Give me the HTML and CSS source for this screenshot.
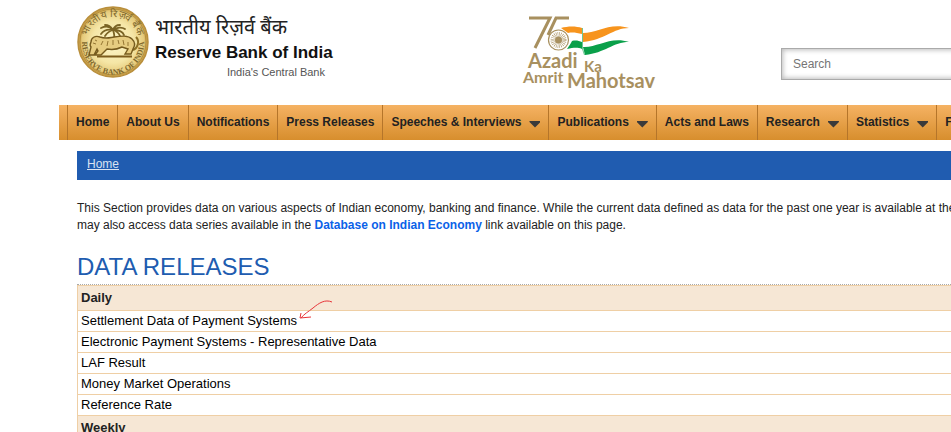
FILE: index.html
```html
<!DOCTYPE html>
<html lang="en">
<head>
<meta charset="utf-8">
<title>Reserve Bank of India</title>
<link rel="stylesheet" href="styles.css">
</head>
<body>
<header class="header">
  <div class="brand">
    <svg class="seal" viewBox="0 0 72 72" role="img" aria-label="Reserve Bank of India seal">
      <defs>
        <radialGradient id="gold" cx="0.5" cy="0.5" r="0.5">
          <stop offset="0" stop-color="#fdf6cc"/>
          <stop offset="0.6" stop-color="#f5e6a6"/>
          <stop offset="0.88" stop-color="#e6cb7c"/>
          <stop offset="1" stop-color="#bd9038"/>
        </radialGradient>
        <path id="arc-top" d="M10.500 42a26 26 0 1 1 51 0"/>
        <path id="arc-bottom" d="M5.500 32a31 31 0 1 0 61 0"/>
      </defs>
      <circle cx="36" cy="36" r="35" fill="url(#gold)" stroke="#b98f3c" stroke-width="1.500"/>
      <circle cx="36" cy="36" r="33" fill="none" stroke="#a37a2a" stroke-width="0.600"/>
      <text class="seal-hindi"><textPath href="#arc-top" startOffset="50%">भारतीय रिज़र्व बैंक</textPath></text>
      <text class="seal-text"><textPath href="#arc-bottom" startOffset="50%">RESERVE BANK OF INDIA</textPath></text>
      <g fill="none" stroke="#7a6324" stroke-width="1.800" stroke-linecap="round">
        <path d="M37 33c1-3 0-6-1-9"/>
        <path d="M36 24c-3-4-8-4-12-2M36 24c-6-1-10 1-12 4M36 24c-4 1-6 3-8 6M36 24c-2-3-5-5-8-5M36 24c1-3 3-5 7-5M36 24c4-3 9-3 12-1M36 24c6 0 10 2 11 5M36 24c3 1 6 3 7 6"/>
      </g>
      <path d="M55 44c6-1 8-9 4-13" fill="none" stroke="#8d7025" stroke-width="2"/>
      <path d="M14 36c0-4 4-7 9-5 6 2 8 1 14 0 7-1 14-2 18 2 3 3 3 7 1 10l-2 5h-6l3-5-6-2c-6 3-10 3-15 2l-4 4-2 2h-6l3-4-1-2-3 6h-5l2-8c-1-1-1-3 0-5z" fill="#e6cc80" stroke="#755a1d" stroke-width="1.400"/>
      <path d="M16 37l3 1M18 34l2 1M26 35l-2 4M31 35l-1 5M36 34v5M41 34l1 4M46 34l1 5M51 36v4" stroke="#957632" stroke-width="1"/>
      <path d="M20 50.500h35" stroke="#7d5c1c" stroke-width="2"/>
    </svg>
    <div class="brand-text">
      <span class="brand-hindi" lang="hi">भारतीय रिज़र्व बैंक</span>
      <span class="brand-name">Reserve Bank of India</span>
      <span class="brand-tag">India's Central Bank</span>
    </div>
  </div>
  <svg class="azadi" viewBox="0 0 134 80" role="img" aria-label="75 Azadi Ka Amrit Mahotsav">
    <g fill="none" stroke="#a8905f" stroke-width="3">
      <path d="M7 4h21L13 34"/>
      <path d="M47 4H34L26 21"/>
    </g>
    <path d="M39 14c7-2 15-2 21 0v6c-5-1-9-2-14-1z" fill="#f7941d"/>
    <path d="M61 19c14 0 27-11 46-5-16 0-24 12-46 14z" fill="#f7941d"/>
    <path d="M45 35c2-3 4-6 5-8 4-1 7 0 10 1v7c-5-2-9-1-15 0z" fill="#0aa04a"/>
    <path d="M61 33c14 1 27-11 46-5-16 0-24 11-44 13z" fill="#0aa04a"/>
    <path d="M60.500 14v21l2 6" fill="none" stroke="#0aa04a" stroke-width="0.600"/>
    <circle cx="36.500" cy="26" r="10" fill="#fff" stroke="#a8905f" stroke-width="1.200"/>
    <circle cx="36.500" cy="26" r="5.500" fill="none" stroke="#a8905f" stroke-width="5" stroke-dasharray="0.500 0.940"/>
    <circle cx="36.500" cy="26" r="3.500" fill="#a8905f"/>
    <g class="azadi-text">
      <text x="6" y="54" font-size="20">Azadi</text>
      <text x="62" y="58" font-size="15">Ka</text>
      <text x="1" y="69" font-size="16">Amrit</text>
      <text x="45" y="74" font-size="20">Mahotsav</text>
    </g>
  </svg>
  <form class="search">
    <input class="search-box" type="search" placeholder="Search" aria-label="Search">
  </form>
</header>

<nav class="nav" aria-label="Main">
  <a class="nav-item" href="#">Home</a>
  <a class="nav-item" href="#">About Us</a>
  <a class="nav-item" href="#">Notifications</a>
  <a class="nav-item" href="#">Press Releases</a>
  <a class="nav-item has-menu" href="#">Speeches &amp; Interviews</a>
  <a class="nav-item has-menu" href="#">Publications</a>
  <a class="nav-item" href="#">Acts and Laws</a>
  <a class="nav-item has-menu" href="#">Research</a>
  <a class="nav-item has-menu" href="#">Statistics</a>
  <a class="nav-item" href="#">FAQs</a>
</nav>

<main class="content">
  <div class="breadcrumb"><a href="#">Home</a></div>
  <p class="intro">This Section provides data on various aspects of Indian economy, banking and finance. While the current data defined as data for the past one year is available at the<br>may also access data series available in the <a href="#">Database on Indian Economy</a> link available on this page.</p>
  <h1 class="title">DATA RELEASES</h1>
  <table class="releases">
    <tbody>
      <tr><th scope="rowgroup">Daily</th></tr>
      <tr><td><span class="marked">Settlement Data of Payment Systems
        <svg class="pen" viewBox="0 0 36 22" aria-hidden="true"><path d="M35 3C28 0 22 4 16 9 11 13 7 15 4 19M4 14L3 19L14 18"/></svg></span></td></tr>
      <tr><td>Electronic Payment Systems - Representative Data</td></tr>
      <tr><td>LAF Result</td></tr>
      <tr><td>Money Market Operations</td></tr>
      <tr><td>Reference Rate</td></tr>
    </tbody>
    <tbody>
      <tr><th scope="rowgroup">Weekly</th></tr>
    </tbody>
  </table>
</main>
</body>
</html>
```
FILE: styles.css
```css
body {
  margin: 0;
  overflow: hidden;
  background: #fff;
  color: #222;
  font: 12px/17px "Liberation Sans", Arial, sans-serif;
}

.header {
  display: flex;
  align-items: flex-start;
  height: 99px;
  padding: 6px 0 0 77px;
}

.brand {
  display: flex;
  gap: 6px;
  width: 445px;
  flex: none;
}

.seal {
  width: 72px;
  height: 72px;
  flex: none;
}

.seal-hindi,
.seal-text {
  fill: #80682c;
  text-anchor: middle;
}

.seal-hindi {
  font-size: 10px;
}

.seal-text {
  font-family: "Liberation Serif", serif;
  font-size: 8px;
  font-weight: bold;
}

.brand-text {
  display: flex;
  flex-direction: column;
  width: 180px;
  padding-top: 9px;
  white-space: nowrap;
}

.brand-hindi {
  color: #222;
  font-family: "Noto Sans Devanagari", "Noto Sans", sans-serif;
  font-size: 20px;
  line-height: 28px;
}

.brand-name {
  color: #111;
  font-size: 17px;
  font-weight: bold;
  line-height: 20px;
}

.brand-tag {
  margin-right: 10px;
  color: #555;
  font-size: 11px;
  line-height: 18px;
  text-align: right;
}

.azadi {
  width: 134px;
  height: 80px;
  margin-top: 8px;
  flex: none;
  overflow: visible;
}

.azadi-text {
  fill: #a8905f;
  font-family: Lato, sans-serif;
  font-weight: bold;
}

.search {
  flex: 1 0 200px;
  margin: 42px 0 0 125px;
}

.search-box {
  box-sizing: border-box;
  width: 100%;
  height: 32px;
  padding: 0 11px;
  border: 1px solid #aaa;
  border-radius: 0;
  outline: 0;
  box-shadow: inset 0 0 5px 1px #bbb;
  appearance: none;
  font: inherit;
}

.search-box::placeholder {
  color: #757575;
}

.nav {
  display: flex;
  margin-left: 59px;
  padding-left: 8px;
  overflow: hidden;
  background: linear-gradient(#f5b263, #d78e2d);
}

.nav-item {
  display: flex;
  flex: none;
  align-items: center;
  gap: 8px;
  height: 35px;
  padding: 0 8px;
  border-left: 1px solid #b5752a;
  color: #222;
  font-weight: bold;
  text-decoration: none;
}

.has-menu::after {
  content: "";
  width: 11px;
  height: 7px;
  margin-top: 3px;
  background: #3a3a3a;
  clip-path: polygon(0 0, 100% 0, 100% 20%, 50% 100%, 0 20%);
}

.content {
  margin: 11px 0 0 77px;
}

.breadcrumb {
  padding: 5px 10px 7px;
  background: #205cb0;
}

.breadcrumb a {
  color: #d9e3f2;
}

.intro {
  margin: 20px 0 19px;
  white-space: nowrap;
}

.intro a {
  color: #0a62e8;
  font-weight: bold;
  text-decoration: none;
}

.title {
  margin: 0;
  padding-bottom: 3px;
  border-bottom: 1px dotted #aaa;
  color: #205cb0;
  font-size: 24px;
  font-weight: normal;
  line-height: 28px;
}

.releases {
  width: calc(100% + 40px);
  border-collapse: collapse;
  color: #000;
  font-size: 13px;
}

.releases th,
.releases td {
  height: 18px;
  padding: 0 3px 2px;
  border: 1px solid #efcfa5;
  text-align: left;
}

.releases th {
  height: 22px;
  background: #f6e7d5;
  color: #222;
}

.marked {
  position: relative;
}

.pen {
  position: absolute;
  top: -14px;
  left: 100%;
  width: 36px;
  height: 22px;
  overflow: visible;
  fill: none;
  stroke: #e8353a;
}
```
